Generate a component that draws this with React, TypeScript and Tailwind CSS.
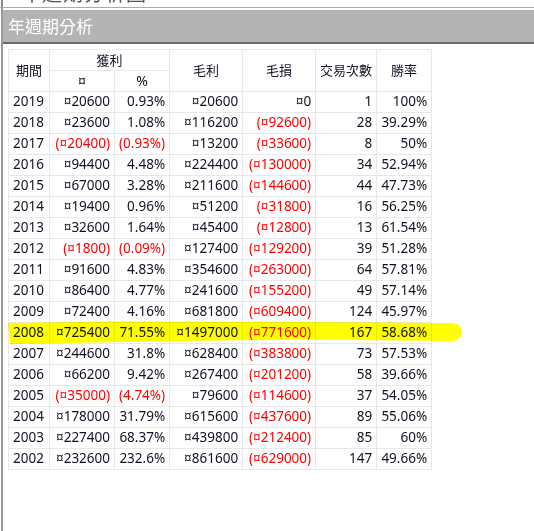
import React from 'react';

type Row = [string, string, string, string, string, string, string];

const rows: Row[] = [
  ['2019', '¤20600', '0.93%', '¤20600', '¤0', '1', '100%'],
  ['2018', '¤23600', '1.08%', '¤116200', '(¤92600)', '28', '39.29%'],
  ['2017', '(¤20400)', '(0.93%)', '¤13200', '(¤33600)', '8', '50%'],
  ['2016', '¤94400', '4.48%', '¤224400', '(¤130000)', '34', '52.94%'],
  ['2015', '¤67000', '3.28%', '¤211600', '(¤144600)', '44', '47.73%'],
  ['2014', '¤19400', '0.96%', '¤51200', '(¤31800)', '16', '56.25%'],
  ['2013', '¤32600', '1.64%', '¤45400', '(¤12800)', '13', '61.54%'],
  ['2012', '(¤1800)', '(0.09%)', '¤127400', '(¤129200)', '39', '51.28%'],
  ['2011', '¤91600', '4.83%', '¤354600', '(¤263000)', '64', '57.81%'],
  ['2010', '¤86400', '4.77%', '¤241600', '(¤155200)', '49', '57.14%'],
  ['2009', '¤72400', '4.16%', '¤681800', '(¤609400)', '124', '45.97%'],
  ['2008', '¤725400', '71.55%', '¤1497000', '(¤771600)', '167', '58.68%'],
  ['2007', '¤244600', '31.8%', '¤628400', '(¤383800)', '73', '57.53%'],
  ['2006', '¤66200', '9.42%', '¤267400', '(¤201200)', '58', '39.66%'],
  ['2005', '(¤35000)', '(4.74%)', '¤79600', '(¤114600)', '37', '54.05%'],
  ['2004', '¤178000', '31.79%', '¤615600', '(¤437600)', '89', '55.06%'],
  ['2003', '¤227400', '68.37%', '¤439800', '(¤212400)', '85', '60%'],
  ['2002', '¤232600', '232.6%', '¤861600', '(¤629000)', '147', '49.66%'],
];

const cell = 'border border-[#e8e8e8] h-[21px] p-0 px-[4px] leading-none whitespace-nowrap';
const head = 'border border-[#e8e8e8] h-[21px] p-0 text-center font-normal text-[13px] leading-none';
const subHead = 'border border-[#e8e8e8] h-[21px] p-0 text-center font-normal text-[14px] leading-none';

export default function App() {
  return (
    <div
      className="w-[534px] h-[531px] bg-white relative overflow-hidden flex flex-col"
      style={{ fontFamily: '"Noto Sans", "Noto Sans CJK TC", sans-serif' }}
    >
      {/* tail of the section above, scrolled out of view */}
      <div className="h-[7px] ml-[1px] border-l-2 border-[#8c8c8c] overflow-hidden pl-[18px]">
        <div className="-mt-[18px] text-[20px] leading-[24px] text-[#555] tracking-[1px]">
          年週期分析圖
        </div>
      </div>
      <div className="border-t border-[#ababab]" />

      <div className="flex-1 ml-[1px] border-l-2 border-[#9a9a9a] flex flex-col">
        <div className="border-t-2 border-white">
          <div className="h-[34px] bg-[#b4b4b4] border-b-2 border-[#6b6b6b] flex items-center pl-[5px] text-white text-[17px] leading-none">
            年週期分析
          </div>
        </div>

        <div className="mt-[5px] ml-[5px]">
          <table className="border-collapse table-fixed text-[13.5px] text-[#121225]">
            <colgroup>
              <col className="w-[41px]" />
              <col className="w-[65px]" />
              <col className="w-[55px]" />
              <col className="w-[73px]" />
              <col className="w-[73px]" />
              <col className="w-[61px]" />
              <col className="w-[55px]" />
            </colgroup>
            <thead>
              <tr>
                <th rowSpan={2} className={head}>期間</th>
                <th colSpan={2} className={head}>獲利</th>
                <th rowSpan={2} className={head}>毛利</th>
                <th rowSpan={2} className={head}>毛損</th>
                <th rowSpan={2} className={head}>交易次數</th>
                <th rowSpan={2} className={head}>勝率</th>
              </tr>
              <tr>
                <th className={subHead}>¤</th>
                <th className={subHead}>%</th>
              </tr>
            </thead>
            <tbody>
              {rows.map((r) => (
                <tr key={r[0]}>
                  {r.map((v, i) => (
                    <td
                      key={i}
                      className={`${cell} ${i === 0 ? 'text-left' : 'text-right'} ${
                        v.startsWith('(') ? 'text-[#ff0000]' : ''
                      }`}
                    >
                      {v}
                    </td>
                  ))}
                </tr>
              ))}
            </tbody>
          </table>
        </div>
      </div>

      {/* marker highlight over the 2008 row */}
      <svg
        className="absolute left-0 top-0 pointer-events-none mix-blend-multiply"
        width="534"
        height="531"
        viewBox="0 0 534 531"
      >
        <path
          d="M8,323 L120,321.5 L300,322 L452,323 Q462,324 462,332 Q461,341 451,341 L300,339.5 L120,342 L10,344 Z"
          fill="#ffff00"
        />
      </svg>
    </div>
  );
}
